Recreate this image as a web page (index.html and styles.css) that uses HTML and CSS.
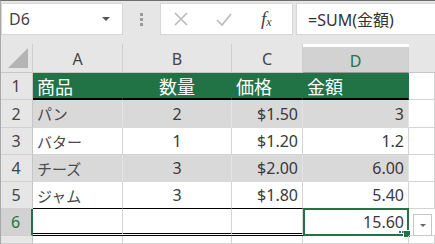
FILE: index.html
```html
<!DOCTYPE html>
<html>

<head>
    <title>SUM</title>
    <link rel="stylesheet" href="styles.css">
</head>

<body>
    <div class="bar">
        <div class="namebox">
            <span>D6</span>
            <span class="caret"></span>
        </div>
        <div class="grip"><i></i><i></i><i></i></div>
        <div class="fbtns">
            <svg width="16" height="16" viewBox="0 0 16 16"><path d="M2 2L14 14M14 2L2 14" stroke="#b9b9b9" stroke-width="1.6" fill="none"/></svg>
            <svg width="18" height="16" viewBox="0 0 18 16"><path d="M2 9L7 14L16 3" stroke="#b9b9b9" stroke-width="1.6" fill="none"/></svg>
            <span class="fx">f<sub>x</sub></span>
        </div>
        <div class="formula">=SUM(金額)</div>
    </div>

    <div class="sheet">
        <div class="corner"></div>
        <div class="ch">A</div>
        <div class="ch">B</div>
        <div class="ch">C</div>
        <div class="ch sel">D</div>
        <div class="ch blank"></div>

        <div class="rh">1</div>
        <div class="c hd">商品</div>
        <div class="c hd mid">数量</div>
        <div class="c hd">価格</div>
        <div class="c hd">金額</div>
        <div class="c"></div>

        <div class="rh">2</div>
        <div class="c band jp">パン</div>
        <div class="c band mid">2</div>
        <div class="c band num">$1.50</div>
        <div class="c band num">3</div>
        <div class="c"></div>

        <div class="rh">3</div>
        <div class="c jp">バター</div>
        <div class="c mid">1</div>
        <div class="c num">$1.20</div>
        <div class="c num">1.2</div>
        <div class="c"></div>

        <div class="rh">4</div>
        <div class="c band jp">チーズ</div>
        <div class="c band mid">3</div>
        <div class="c band num">$2.00</div>
        <div class="c band num">6.00</div>
        <div class="c"></div>

        <div class="rh">5</div>
        <div class="c jp">ジャム</div>
        <div class="c mid">3</div>
        <div class="c num">$1.80</div>
        <div class="c num">5.40</div>
        <div class="c"></div>

        <div class="rh sel">6</div>
        <div class="c total"></div>
        <div class="c total"></div>
        <div class="c total"></div>
        <div class="c total num active">15.60<span class="handle"></span><span class="spark"></span></div>
        <div class="c opt"><span class="optbtn"><span class="caret"></span></span></div>

        <div class="rh"></div>
        <div class="c"></div>
        <div class="c"></div>
        <div class="c"></div>
        <div class="c"></div>
        <div class="c"></div>
    </div>
</body>

</html>
```

FILE: styles.css
```css
body {
    margin: 0;
    width: 435px;
    height: 244px;
    overflow: hidden;
    font-family: "Noto Sans", "Noto Sans CJK JP", sans-serif;
    color: #3a3a3a;
    background: #fff;
    position: relative;
}

/* window frame edge */
body::before {
    content: "";
    position: absolute;
    top: 0;
    left: 0;
    right: 0;
    bottom: 0;
    border-top: 1px solid #6e6e6e;
    border-left: 1px solid #a8a8a8;
    pointer-events: none;
    z-index: 5;
}

.bar {
    height: 44px;
    background: #e6e6e6;
    display: flex;
    align-items: flex-start;
    padding-top: 3px;
    box-sizing: border-box;
}

.namebox {
    width: 122px;
    height: 32px;
    margin-left: 1px;
    background: #fff;
    border: 1px solid #d6d6d6;
    box-sizing: border-box;
    display: flex;
    align-items: center;
    justify-content: space-between;
    padding: 0 12px 0 7px;
    font-size: 16px;
    color: #444;
}

.caret {
    width: 0;
    height: 0;
    border-left: 4px solid transparent;
    border-right: 4px solid transparent;
    border-top: 4px solid #555;
}

.grip {
    width: 37px;
    height: 32px;
    display: flex;
    flex-direction: column;
    align-items: center;
    justify-content: center;
    gap: 2px;
}

.grip i {
    width: 3px;
    height: 3px;
    background: #9a9a9a;
}

.fbtns {
    width: 133px;
    height: 32px;
    background: #fff;
    border: 1px solid #d6d6d6;
    box-sizing: border-box;
    display: flex;
    align-items: center;
    padding-left: 12px;
    gap: 26px;
}

.fx {
    font-family: "Liberation Serif", serif;
    font-style: italic;
    font-size: 19px;
    color: #444;
    margin-left: 2px;
}

.fx sub {
    font-size: 12px;
    vertical-align: -1px;
}

.formula {
    flex: 1;
    height: 32px;
    margin-left: 3px;
    background: #fff;
    border: 1px solid #d6d6d6;
    border-right: none;
    box-sizing: border-box;
    display: flex;
    align-items: center;
    padding-left: 11px;
    font-size: 16px;
    color: #333;
}

.sheet {
    display: grid;
    grid-template-columns: 33px 90px 109px 71px 106px 26px;
    grid-template-rows: 29px 27px 28px 27px 27px 27px 27px 8px;
}

.corner {
    background: #e6e6e6;
    border-right: 1px solid #d0d0d0;
    border-bottom: 1px solid #c6c6c6;
    box-sizing: border-box;
    position: relative;
}

.corner::after {
    content: "";
    position: absolute;
    right: 4px;
    bottom: 4px;
    border-left: 20px solid transparent;
    border-bottom: 20px solid #b4b4b4;
}

.ch {
    background: #e6e6e6;
    border-right: 1px solid #d0d0d0;
    border-bottom: 1px solid #c6c6c6;
    box-sizing: border-box;
    display: flex;
    align-items: center;
    justify-content: center;
    font-size: 16px;
    color: #444;
    padding-top: 2px;
}

.ch.sel {
    background: #d2d2d2;
    color: #217346;
    margin-top: 3px;
    border-bottom: 1px solid #999;
}

.ch.blank {
    border-right: none;
}

.rh {
    background: #e6e6e6;
    border-right: 1px solid #c6c6c6;
    border-bottom: 1px solid #d0d0d0;
    box-sizing: border-box;
    display: flex;
    align-items: center;
    justify-content: center;
    font-size: 16px;
    color: #444;
}

.rh.sel {
    background: #d2d2d2;
    color: #217346;
    border-right: 2px solid #217346;
}

.c {
    border-right: 1px solid #d4d4d4;
    border-bottom: 1px solid #d4d4d4;
    box-sizing: border-box;
    display: flex;
    align-items: center;
    padding: 0 4px;
    font-size: 16px;
    white-space: nowrap;
    position: relative;
}

.jp {
    font-size: 15px;
    color: #4a4a4a;
}

.hd {
    background: #217346;
    color: #fff;
    font-size: 18px;
    border-right-color: #217346;
    border-bottom: 2px solid #000;
}

.band {
    background: #d9d9d9;
    border-right-color: #e4e4e4;
    border-bottom-color: #d9d9d9;
}

.mid {
    justify-content: center;
}

.num {
    justify-content: flex-end;
}

.total {
    border-top: 1px solid #000;
    border-bottom: 3px double #000;
    border-right-color: #d4d4d4;
    margin-top: -1px;
}

.active {
    border: 2px solid #217346;
    padding-right: 3px;
}

.handle {
    position: absolute;
    right: -4px;
    bottom: -4px;
    width: 6px;
    height: 6px;
    background: #217346;
    border: 1px solid #fff;
}

.spark {
    position: absolute;
    right: 3px;
    bottom: 1px;
    width: 5px;
    height: 2px;
    border-bottom: 2px dotted #3b5bbf;
}

.opt {
    padding: 0;
    border-right: none;
}

.optbtn {
    position: absolute;
    left: 4px;
    top: 5px;
    width: 19px;
    height: 22px;
    background: #fff;
    border: 1px solid #c6c6c6;
    box-sizing: border-box;
    display: flex;
    align-items: center;
    justify-content: center;
    z-index: 2;
}

.optbtn .caret {
    border-top-color: #666;
    border-left-width: 3px;
    border-right-width: 3px;
    border-top-width: 3px;
}
```
